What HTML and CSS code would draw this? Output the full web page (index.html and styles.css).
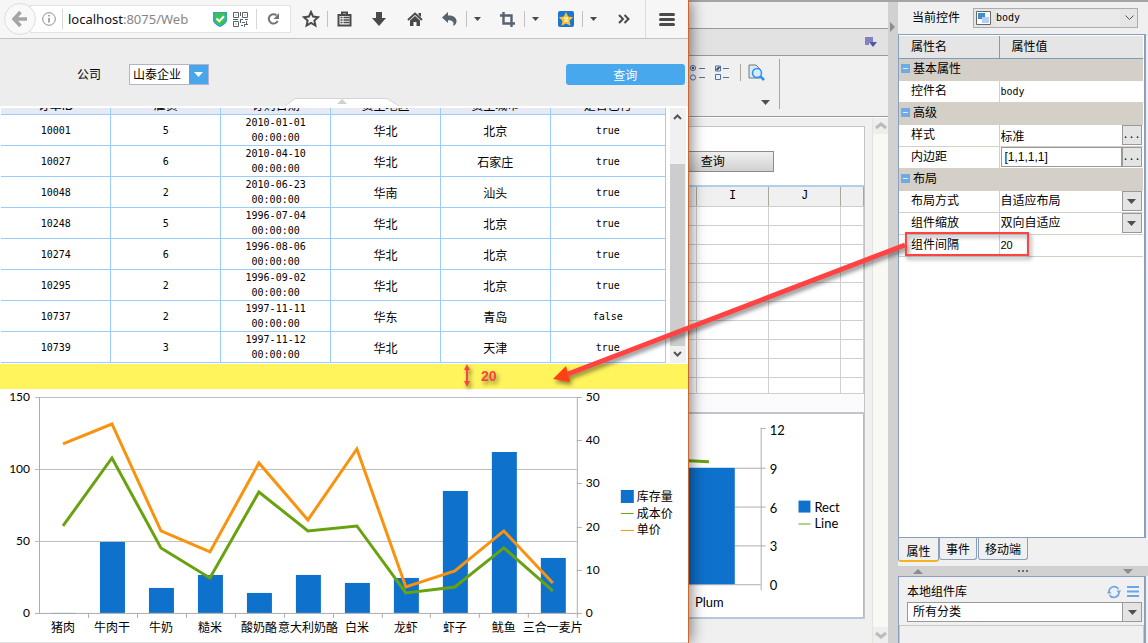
FILE: index.html
```html
<!DOCTYPE html>
<html lang="zh-CN">
<head>
    <meta charset="UTF-8">
    <meta name="viewport" content="width=device-width, initial-scale=1.0">
    <title>组件间隔</title>
    <link rel="stylesheet" href="styles.css">
</head>
<body>
    <div class="browser">
        <div class="toolbar">
            <button class="back" aria-label="后退"><svg width="16" height="16" viewBox="0 0 16 16"><path d="M8.500 1L2 8l6.500 7M3 8h12" fill="none" stroke="#a5a5a5" stroke-width="3.600"/></svg></button>
            <div class="urlbar">
                <svg width="14" height="14" viewBox="0 0 14 14"><circle cx="7" cy="7" r="6.300" fill="none" stroke="#8c8c8c"/><path d="M7 6v4.500M7 3v1.600" stroke="#8c8c8c" stroke-width="1.500"/></svg>
                <a class="url" href="#"><b>localhost</b>:8075/Web</a>
                <svg width="14" height="15" viewBox="0 0 14 15"><path d="M0 0h14v9q-2 4-7 6q-5-2-7-6z" fill="#2f9fd6"/><path d="M1.500 1h11v8q-2 3-5.500 4.600Q3 12 1.500 9z" fill="#3fc14d"/><path d="M3.500 6.500L6.300 9.300l4.700-5" fill="none" stroke="#fff" stroke-width="2"/></svg>
                <svg width="15" height="15" viewBox="0 0 15 15"><g fill="none" stroke="#5a6270"><path d="M.5.5h5v5h-5zM9.500.5h5v5h-5zM.5 9.500h5v5h-5zM2.500 3h1M11.500 3h1M2.500 12h1"/><path d="M7.500 0v4M7 7.500h3M0 7.500h5M12 7.500h3M7.500 8v3M9 10.500h3M8 13.500h2M12 12.500h3M13.500 9v3M11.500 12v3"/></g></svg>
                <button class="reload" aria-label="刷新"><svg width="13" height="14" viewBox="0 0 13 14"><path d="M9.500 3.200A4.700 4.700 0 1 0 10.700 9" fill="none" stroke="#747474" stroke-width="2"/><path d="M12 1v6H6.500z" fill="#747474"/></svg></button>
            </div>
            <button class="tool tool-star" aria-label="收藏"><svg width="18" height="18" viewBox="0 0 18 18"><path d="M9 2l2.100 4.600 5 .6-3.700 3.400 1 4.900L9 13l-4.400 2.500 1-4.900L1.900 7.200l5-.6z" fill="none" stroke="#4a4a4a" stroke-width="2"/></svg></button>
            <button class="tool" aria-label="书签"><svg width="15" height="16" viewBox="0 0 15 16"><path d="M1.500 4h12v10.500h-12zM5 3.500V1.500h5v2" fill="none" stroke="#4a4a4a" stroke-width="2"/><path d="M3.500 6.500h2M6.500 6.500h6M3.500 9h2M6.500 9h6M3.500 11.500h2M6.500 11.500h6" stroke="#4a4a4a" stroke-width="1.500"/></svg></button>
            <button class="tool tool-wide" aria-label="下载"><svg width="14" height="14" viewBox="0 0 14 14"><path d="M4 0h6v6h4l-7 8-7-8h4z" fill="#4a4a4a"/></svg></button>
            <button class="tool tool-wide" aria-label="主页"><svg width="16" height="15" viewBox="0 0 16 15"><path d="M1 8l7-6.500L15 8" fill="none" stroke="#4a4a4a" stroke-width="2"/><path d="M3 8.500l5-4.500 5 4.500V14H9.500v-4h-3v4H3zM11.500 1H14v4l-2.500-2z" fill="#4a4a4a"/></svg></button>
            <button class="tool" aria-label="撤销"><svg width="16" height="14" viewBox="0 0 16 14"><path d="M0 5.500L6 0v3.500c5-.5 9 2 8.500 6.500-.3 2-1.500 3.300-3.500 4 1.500-3.500 0-6-5-5.800V11z" fill="#566270"/></svg></button>
            <button class="caret" aria-label="更多撤销"><svg width="7" height="4" viewBox="0 0 7 4"><path d="M0 0h7L3.500 4z" fill="#4a4a4a"/></svg></button>
            <button class="tool" aria-label="截图"><svg width="15" height="15" viewBox="0 0 15 15"><path d="M3.500 0v11.500H15M0 3.500h11.500V15" fill="none" stroke="#566270" stroke-width="2.400"/></svg></button>
            <button class="caret" aria-label="更多截图"><svg width="7" height="4" viewBox="0 0 7 4"><path d="M0 0h7L3.500 4z" fill="#4a4a4a"/></svg></button>
            <button class="tool" aria-label="空间"><svg width="16" height="16" viewBox="0 0 16 16"><rect width="16" height="16" rx="2" fill="#1976d2"/><path d="M8 1l2.200 4.600 5 .6-3.700 3.500 1 5L8 12.400 3.500 14.700l1-5L.8 6.200l5-.6z" fill="#fdc22d"/><path d="M5.500 7h4.500L6.500 10h4" fill="none" stroke="#fff"/></svg></button>
            <button class="caret" aria-label="更多空间"><svg width="7" height="4" viewBox="0 0 7 4"><path d="M0 0h7L3.500 4z" fill="#4a4a4a"/></svg></button>
            <button class="tool" aria-label="更多工具"><svg width="12" height="10" viewBox="0 0 12 10"><path d="M1 1l4 4-4 4M6.500 1l4 4-4 4" fill="none" stroke="#4a4a4a" stroke-width="2"/></svg></button>
            <button class="menu" aria-label="菜单"><svg width="16" height="13" viewBox="0 0 16 13"><path d="M1.500 1.500h13M1.500 6.500h13M1.500 11.500h13" stroke="#4a4a4a" stroke-width="3" stroke-linecap="round"/></svg></button>
        </div>

        <div class="query">
            <label for="company">公司</label>
            <div class="company">
                <select id="company"><option>山泰企业</option></select>
                <span class="company-arrow"><svg width="9" height="5" viewBox="0 0 9 5"><path d="M0 0h9L4.500 5z" fill="#fff"/></svg></span>
            </div>
            <button class="search">查询</button>
            <svg class="handle" width="114" height="8" viewBox="0 0 114 8"><path d="M0 8L10 .5h92L114 8" fill="#fff" stroke="#d5d5d5"/><path d="M57 1l5 5H52z" fill="#cfcfcf"/></svg>
        </div>

        <div class="report">
            <div class="report-view">
                <table class="orders">
                    <thead>
                        <tr><th>订单ID</th><th>雇员</th><th>订购日期</th><th>货主地区</th><th>货主城市</th><th>是否已付</th></tr>
                    </thead>
                    <tbody>
                        <tr><td>10001</td><td>5</td><td>2010-01-01<br>00:00:00</td><td class="zh">华北</td><td class="zh">北京</td><td>true</td></tr>
                        <tr><td>10027</td><td>6</td><td>2010-04-10<br>00:00:00</td><td class="zh">华北</td><td class="zh">石家庄</td><td>true</td></tr>
                        <tr><td>10048</td><td>2</td><td>2010-06-23<br>00:00:00</td><td class="zh">华南</td><td class="zh">汕头</td><td>true</td></tr>
                        <tr><td>10248</td><td>5</td><td>1996-07-04<br>00:00:00</td><td class="zh">华北</td><td class="zh">北京</td><td>true</td></tr>
                        <tr><td>10274</td><td>6</td><td>1996-08-06<br>00:00:00</td><td class="zh">华北</td><td class="zh">北京</td><td>true</td></tr>
                        <tr><td>10295</td><td>2</td><td>1996-09-02<br>00:00:00</td><td class="zh">华北</td><td class="zh">北京</td><td>true</td></tr>
                        <tr><td>10737</td><td>2</td><td>1997-11-11<br>00:00:00</td><td class="zh">华东</td><td class="zh">青岛</td><td>false</td></tr>
                        <tr><td>10739</td><td>3</td><td>1997-11-12<br>00:00:00</td><td class="zh">华北</td><td class="zh">天津</td><td>true</td></tr>
                    </tbody>
                </table>
            </div>
            <div class="scrollbar">
                <svg width="9" height="6" viewBox="0 0 9 6"><path d="M1 5l3.500-3.500L8 5" fill="none" stroke="#555" stroke-width="2"/></svg>
                <div class="thumb"></div>
                <svg width="9" height="6" viewBox="0 0 9 6"><path d="M1 1l3.500 3.500L8 1" fill="none" stroke="#555" stroke-width="2"/></svg>
            </div>
        </div>

        <div class="spacer"></div>

        <svg class="chart" viewBox="0 0 688 253">
            <path d="M35 8.500h542M35 80.500h542M35 152.500h542" stroke="#bdbdbd" fill="none"/>
            <g fill="#0e71cc">
                <rect x="51" y="224" width="25" height="1"/>
                <rect x="100" y="153" width="25" height="71"/>
                <rect x="149" y="199" width="25" height="25"/>
                <rect x="198" y="186" width="25" height="38"/>
                <rect x="247" y="204" width="25" height="20"/>
                <rect x="296" y="186" width="25" height="38"/>
                <rect x="345" y="194" width="25" height="30"/>
                <rect x="394" y="189" width="25" height="35"/>
                <rect x="443" y="102" width="25" height="122"/>
                <rect x="492" y="63" width="25" height="161"/>
                <rect x="541" y="169" width="25" height="55"/>
            </g>
            <path d="M39.500 8v216M35 224.500h547M577.500 8v221M577 8.500h5M577 51.500h5M577 94.500h5M577 138.500h5M577 181.500h5M88.500 224v5M137.500 224v5M186.500 224v5M235.500 224v5M284.500 224v5M333.500 224v5M382.500 224v5M430.500 224v5M479.500 224v5M528.500 224v5" stroke="#adadad" fill="none"/>
            <polyline points="63,55 112,35 161,142 210,163 259,74 308,131 357,60 406,198 455,182 504,142 553,194" fill="none" stroke="#f9930f" stroke-width="3"/>
            <polyline points="63,137 112,69 161,159 210,189 259,103 308,142 357,137 406,204 455,198 504,159 553,202" fill="none" stroke="#69a20f" stroke-width="3"/>
            <g class="axis-left"><text x="30" y="12">150</text><text x="30" y="84">100</text><text x="30" y="156">50</text><text x="30" y="228">0</text></g>
            <g><text x="586" y="12">50</text><text x="586" y="55">40</text><text x="586" y="98">30</text><text x="586" y="142">20</text><text x="586" y="185">10</text><text x="586" y="228">0</text></g>
            <g class="categories">
                <text x="63" y="243">猪肉</text><text x="112" y="243">牛肉干</text><text x="161" y="243">牛奶</text><text x="210" y="243">糙米</text><text x="259" y="243">酸奶酪</text><text x="308" y="243">意大利奶酪</text><text x="357" y="243">白米</text><text x="406" y="243">龙虾</text><text x="455" y="243">虾子</text><text x="504" y="243">鱿鱼</text><text x="553" y="243">三合一麦片</text>
            </g>
            <rect x="621" y="101" width="13" height="13" fill="#0e71cc"/>
            <path d="M621 124.500h13" stroke="#69a20f"/>
            <path d="M621 141.500h13" stroke="#f9930f"/>
            <text x="637" y="112">库存量</text><text x="637" y="129">成本价</text><text x="637" y="145">单价</text>
        </svg>
    </div>

    <div class="designer">
        <div class="designer-top"></div>
        <div class="designer-bar">
            <svg width="12" height="10" viewBox="0 0 12 10"><path d="M0 0h8v5H4v3H0z" fill="#7f80c5"/><path d="M4 5h8L8 10z" fill="#5254ab"/></svg>
        </div>
        <div class="widgets">
            <div class="widget-group">
                <div class="widget-row">
                    <svg width="15" height="16" viewBox="0 0 15 16"><g fill="none" stroke="#5270a5"><circle cx="3" cy="3" r="2.600"/><circle cx="3" cy="12.500" r="2.600"/><path d="M9 3.500h6M9 12.500h6"/></g><circle cx="3" cy="3" r="1.200" fill="#344d8c"/></svg>
                    <svg width="15" height="16" viewBox="0 0 15 16"><path d="M.5 1h5v5h-5zM.5 9.500h5v5h-5zM8 3.500h6M8 12.500h6" fill="none" stroke="#5270a5"/><path d="M1.500 5l3-3" stroke="#344d8c" stroke-width="2"/></svg>
                    <svg class="preview" width="17" height="17" viewBox="0 0 17 17"><path d="M1 1h7l4 4v9H1z" fill="#d5ecf7" stroke="#777"/><circle cx="9" cy="9" r="4.500" fill="#d7ecff" stroke="#2e90f7" stroke-width="1.500"/><path d="M12.500 12.500L16 16" stroke="#2e90f7" stroke-width="2.500"/></svg>
                </div>
                <svg width="9" height="5" viewBox="0 0 9 5"><path d="M0 0h9L4.500 5z" fill="#505050"/></svg>
            </div>
        </div>
        <div class="workspace">
            <div class="canvas">
                <div class="canvas-query"><button class="canvas-search">查询</button></div>
                <table class="sheet">
                    <thead><tr><th class="col-cut"></th><th>I</th><th>J</th><th class="col-last"></th></tr></thead>
                    <tbody>
                        <tr><td></td><td></td><td></td><td></td></tr>
                        <tr><td></td><td></td><td></td><td></td></tr>
                        <tr><td></td><td></td><td></td><td></td></tr>
                        <tr><td></td><td></td><td></td><td></td></tr>
                        <tr><td></td><td></td><td></td><td></td></tr>
                        <tr><td></td><td></td><td></td><td></td></tr>
                        <tr><td></td><td></td><td></td><td></td></tr>
                        <tr><td></td><td></td><td></td><td></td></tr>
                        <tr><td></td><td></td><td></td><td></td></tr>
                        <tr class="row-last"><td></td><td></td><td></td><td></td></tr>
                    </tbody>
                </table>
                <div class="canvas-gap"></div>
                <svg class="mini-chart" viewBox="0 0 175 204">
                    <path d="M46 54.500h31M46 93.500h31M46 132.500h31M0 171.500h72M72.500 14v163M72 14.500h5" stroke="#adadad" fill="none"/>
                    <rect x="0" y="54" width="46" height="117" fill="#0e71cc"/>
                    <path d="M0 47L20 48" stroke="#69a20f" stroke-width="3"/>
                    <text x="81" y="21">12</text><text x="81" y="60">9</text><text x="81" y="99">6</text><text x="81" y="138">3</text><text x="81" y="177">0</text>
                    <text x="6" y="194">Plum</text>
                    <rect x="110" y="87" width="12" height="12" fill="#0e71cc"/>
                    <path d="M110 110.500h12" stroke="#69a20f"/>
                    <text x="126" y="98">Rect</text><text x="126" y="115">Line</text>
                </svg>
            </div>
            <div class="canvas-scroll">
                <svg width="16" height="16" viewBox="0 0 16 16"><path d="M3 10l5-4 5 4" fill="none" stroke="#bbb" stroke-width="3"/></svg>
                <svg width="16" height="16" viewBox="0 0 16 16"><path d="M3 6l5 4 5-4" fill="none" stroke="#bbb" stroke-width="3"/></svg>
            </div>
        </div>
    </div>

    <div class="side">
        <div class="divider"><svg width="5" height="10" viewBox="0 0 5 10"><path d="M0 0l5 5-5 5z" fill="#8c8c8c"/></svg></div>
        <div class="panel">
            <div class="current">
                <label for="widget">当前控件</label>
                <div class="widget-select">
                    <svg width="15" height="14" viewBox="0 0 15 14"><path d="M.5.5h14v13H.5z" fill="#fff" stroke="#666"/><path d="M2 2h7v6H2z" fill="#3d8fc9"/><path d="M6 6h7v6H6z" fill="#b7cdf8"/></svg>
                    <select id="widget"><option>body</option></select>
                    <svg width="9" height="6" viewBox="0 0 9 6"><path d="M.5.5l4 4 4-4" fill="none" stroke="#555"/></svg>
                </div>
            </div>
            <div class="props-box">
                <table class="props">
                    <thead><tr><th>属性名</th><th>属性值</th></tr></thead>
                    <tbody>
                        <tr class="group"><td colspan="2"><button class="fold" aria-label="折叠基本属性">−</button>基本属性</td></tr>
                        <tr><td><label for="p-name">控件名</label></td><td><input class="code" id="p-name" type="text" value="body"></td></tr>
                        <tr class="group"><td colspan="2"><button class="fold" aria-label="折叠高级">−</button>高级</td></tr>
                        <tr><td><label for="p-style">样式</label></td><td><div class="field"><input id="p-style" type="text" value="标准"><button class="more">...</button></div></td></tr>
                        <tr><td><label for="p-padding">内边距</label></td><td><div class="field"><input class="boxed" id="p-padding" type="text" value="[1,1,1,1]"><button class="more">...</button></div></td></tr>
                        <tr class="group"><td colspan="2"><button class="fold" aria-label="折叠布局">−</button>布局</td></tr>
                        <tr><td><label for="p-layout">布局方式</label></td><td><div class="field"><select id="p-layout"><option>自适应布局</option></select><span class="more"><svg width="9" height="5" viewBox="0 0 9 5"><path d="M0 0h9L4.500 5z" fill="#505050"/></svg></span></div></td></tr>
                        <tr><td><label for="p-scale">组件缩放</label></td><td><div class="field"><select id="p-scale"><option>双向自适应</option></select><span class="more"><svg width="9" height="5" viewBox="0 0 9 5"><path d="M0 0h9L4.500 5z" fill="#505050"/></svg></span></div></td></tr>
                        <tr><td><label for="p-gap">组件间隔</label></td><td><input class="number" id="p-gap" type="text" value="20"></td></tr>
                    </tbody>
                </table>
            </div>
            <div class="tabs">
                <button class="tab active">属性</button>
                <button class="tab">事件</button>
                <button class="tab tab-mobile">移动端</button>
            </div>
            <div class="splitter">
                <svg width="10" height="5" viewBox="0 0 10 5"><path d="M5 0l5 5H0z" fill="#8c8c8c"/></svg>
                <svg width="10" height="2" viewBox="0 0 10 2"><path d="M0 0h2v2H0zM4 0h2v2H4zM8 0h2v2H8z" fill="#6c6c6c"/></svg>
                <svg width="10" height="5" viewBox="0 0 10 5"><path d="M0 0h10L5 5z" fill="#8c8c8c"/></svg>
            </div>
            <div class="library">
                <div class="library-head">
                    <label for="category">本地组件库</label>
                    <svg width="14" height="14" viewBox="0 0 14 14"><path d="M2 6a5.200 5.200 0 0 1 9.500-2M12 8a5.200 5.200 0 0 1-9.500 2" fill="none" stroke="#6ea5e8" stroke-width="1.600"/><path d="M9.500 5.500h4.500L12 9zM0 8.500h4.500L2 5z" fill="#6ea5e8"/></svg>
                    <svg width="12" height="11" viewBox="0 0 12 11"><path d="M0 1h12M0 5.500h12M0 10h12" stroke="#6ea5e8" stroke-width="2"/></svg>
                </div>
                <div class="category">
                    <select id="category"><option>所有分类</option></select>
                    <span class="more"><svg width="9" height="5" viewBox="0 0 9 5"><path d="M0 0h9L4.500 5z" fill="#505050"/></svg></span>
                </div>
                <div class="library-list"></div>
            </div>
        </div>
    </div>

    <svg class="notes" viewBox="0 0 1148 643">
        <g class="note-mark">
            <rect x="906" y="233" width="122" height="22" fill="none" stroke="#ff4343" stroke-width="2"/>
            <path d="M905 245L568 374" stroke="#ff4343" stroke-width="5"/>
            <path d="M553 379L566 366 570 382z" fill="#ff4016"/>
            <path d="M467 368v16" stroke="#ff4343" stroke-width="2"/>
            <path d="M467 364l3 6h-6zM467 387l3-6h-6z" fill="#ff4343"/>
            <text x="481" y="381">20</text>
        </g>
    </svg>
</body>
</html>
```
FILE: styles.css
```css
* {
    box-sizing: border-box;
}
body {
    margin: 0;
    display: flex;
    min-height: 100vh;
    position: relative;
    overflow: hidden;
    background: #f0f0f0;
    color: #000;
    font-family: "Liberation Sans", "Noto Sans CJK SC", sans-serif;
    font-size: 12px;
    line-height: 16px;
}
button,
input,
select {
    font: inherit;
    color: inherit;
    border: none;
    margin: 0;
    padding: 0;
    background: none;
    appearance: none;
    min-width: 0;
}
svg {
    display: block;
    flex-shrink: 0;
}
table {
    border-collapse: collapse;
    table-layout: fixed;
    width: 100%;
}

/* browser window */
.browser {
    width: 60%;
    display: flex;
    flex-direction: column;
    background: #fff;
    border-right: 1px solid #d0672a;
    box-shadow: 2px 0 14px rgba(0, 0, 0, 0.5);
    position: relative;
    z-index: 1;
}
.toolbar {
    display: flex;
    align-items: center;
    height: 39px;
    background: #f6f6f6;
    border-bottom: 1px solid #c2c2c2;
}
.back {
    display: flex;
    align-items: center;
    justify-content: center;
    width: 32px;
    height: 32px;
    margin-left: 4px;
    background: #f9f9f9;
    border: 1px solid #dedede;
    border-radius: 50%;
    z-index: 1;
}
.urlbar {
    display: flex;
    align-items: center;
    gap: 6px;
    width: 261px;
    height: 28px;
    margin-left: -6px;
    padding-left: 11px;
    background: #fff;
    border: 1px solid #e2e2e2;
}
.url {
    flex: 1;
    height: 20px;
    padding-left: 5px;
    border-left: 1px solid #d8d8d8;
    white-space: nowrap;
    color: #858585;
    text-decoration: none;
    font-family: "Noto Sans", sans-serif;
    font-size: 13px;
    line-height: 20px;
}
.url b {
    font-weight: normal;
    color: #111;
}
.reload {
    display: flex;
    align-items: center;
    justify-content: center;
    width: 34px;
    height: 20px;
    margin-left: 2px;
    border-left: 1px solid #d8d8d8;
}
.tool {
    display: flex;
    align-items: center;
    justify-content: center;
    width: 33px;
    height: 16px;
}
.tool-star {
    width: 33px;
    margin-left: 4px;
    border-right: 1px solid #c2c2c2;
}
.tool-wide {
    width: 36px;
}
.caret {
    display: flex;
    align-items: center;
    width: 25px;
    height: 16px;
    padding-left: 7px;
    border-left: 1px solid #c2c2c2;
}
.menu {
    display: flex;
    align-items: center;
    justify-content: center;
    width: 43px;
    height: 38px;
    margin-left: auto;
    border-left: 1px solid #dcdcdc;
}

.query {
    display: flex;
    align-items: center;
    height: 67px;
    padding: 4px 3px 0 77px;
    background: #ededed;
    position: relative;
}
.company {
    display: flex;
    width: 80px;
    height: 21px;
    margin-left: 28px;
    background: #fff;
    border: 1px solid #b3b3cc;
}
.company select {
    flex: 1;
    padding-left: 3px;
}
.company-arrow {
    display: flex;
    align-items: center;
    justify-content: center;
    width: 19px;
    background: #48a7ec;
    pointer-events: none;
}
.search {
    width: 119px;
    height: 21px;
    margin-left: auto;
    padding-top: 2px;
    background: #48a8ed;
    border-radius: 3px;
    color: #fff;
}
.handle {
    position: absolute;
    left: 50%;
    bottom: 0;
    transform: translateX(-59px);
}

.report {
    display: flex;
    height: 255px;
    margin-top: 2px;
    padding: 0 2px 0 1px;
}
.report-view {
    flex: 1;
    display: flex;
    flex-direction: column;
    justify-content: flex-end;
    overflow: hidden;
}
.orders {
    font-family: "DejaVu Sans Mono", monospace;
    font-size: 10px;
    line-height: 15px;
    text-align: center;
}
.orders th {
    height: 24px;
    padding: 0;
    background: #e6eaf4;
    border: 1px solid #99ccff;
    font-family: "Liberation Sans", "Noto Sans CJK SC", sans-serif;
    font-size: 12px;
    font-weight: normal;
    vertical-align: bottom;
}
.orders td {
    height: 31px;
    padding: 0;
    border: 1px solid #99ccff;
}
.orders th:first-child,
.orders td:first-child {
    border-left: none;
}
.orders th:last-child {
    width: 115px;
}
.orders .zh {
    font-family: "Noto Sans CJK SC", sans-serif;
    font-size: 12px;
}
.scrollbar {
    display: flex;
    flex-direction: column;
    align-items: center;
    width: 16px;
    margin-left: 4px;
    padding: 6px 0;
    background: #f0f0f0;
}
.thumb {
    width: 15px;
    height: 182px;
    margin: auto 0 5px;
    background: #cdcdcd;
}
.spacer {
    height: 25px;
    margin-top: 1px;
    background: #fff45c;
}
.chart {
    width: 100%;
    border-bottom: 1px solid #ddd;
    font-family: Lato, "Noto Sans CJK SC", sans-serif;
    font-size: 12px;
}
.axis-left {
    text-anchor: end;
}
.categories {
    text-anchor: middle;
}

/* report designer */
.designer {
    flex: 1;
    display: flex;
    flex-direction: column;
    min-width: 0;
}
.designer-top {
    height: 29px;
    border-top: 2px solid #a5a5a5;
    border-bottom: 1px solid #999;
}
.designer-bar {
    display: flex;
    align-items: center;
    justify-content: flex-end;
    height: 27px;
    padding-right: 11px;
    background: #e2e2e2;
    border-bottom: 1px solid #999;
}
.widgets {
    height: 61px;
    padding-top: 3px;
    border-bottom: 1px solid #999;
}
.widget-group {
    display: flex;
    flex-direction: column;
    align-items: flex-end;
    justify-content: space-between;
    width: 91px;
    height: 50px;
    padding: 5px 9px 4px 0;
    border-right: 1px solid #aca899;
}
.widget-row {
    display: flex;
    align-items: center;
    gap: 10px;
    margin-right: 5px;
}
.preview {
    width: 25px;
    padding-left: 7px;
    border-left: 1px solid #aca899;
}
.workspace {
    flex: 1;
    display: flex;
    justify-content: space-between;
    border-top: 1px solid #fff;
}
.canvas {
    flex: 1;
    display: flex;
    flex-direction: column;
    align-self: flex-start;
    margin: 8px 7px 0 0;
    background: #fff;
    border: 1px solid #c4c4c4;
    border-left: none;
    border-bottom: 2px solid #b8c8d8;
}
.canvas-query {
    height: 58px;
    padding-top: 24px;
}
.canvas-search {
    display: block;
    width: 85px;
    height: 21px;
    padding-right: 36px;
    background: linear-gradient(#f0f0f0, #d0d0d0);
    border: 1px solid #8c8c8c;
    border-left: none;
}
.sheet {
    border-top: 2px solid #b0cfe8;
    border-right: 1px solid #b0cfe8;
    font-family: "Liberation Mono", monospace;
    font-size: 12px;
}
.sheet th {
    height: 20px;
    padding: 0;
    background: #f0f0f0;
    border-right: 1px solid #aca899;
    border-bottom: 1px solid #cfcfcf;
    font-weight: normal;
}
.sheet td {
    height: 19px;
    padding: 0;
    border-right: 1px solid #cfcfcf;
    border-bottom: 1px solid #cfcfcf;
}
.sheet .row-last td {
    height: 16px;
}
.sheet .col-cut {
    width: 8px;
}
.sheet .col-last {
    width: 23px;
}
.canvas-gap {
    height: 20px;
    background: #fbfbfd;
    border-bottom: 2px solid #c4c4c4;
}
.mini-chart {
    width: 100%;
    border-right: 1px solid #bbb;
    font-family: Lato, sans-serif;
    font-size: 13px;
}
.canvas-scroll {
    display: flex;
    flex-direction: column;
    justify-content: space-between;
    width: 16px;
    background: #f8f8f5;
    border-left: 1px solid #e4e4da;
}
.canvas-scroll svg {
    background: #eee;
}

/* property panel */
.side {
    display: flex;
    width: 260px;
    border-top: 2px solid #a5a5a5;
}
.divider {
    width: 10px;
    padding: 20px 0 0 2px;
    background: #d1d1d1;
}
.panel {
    flex: 1;
    display: flex;
    flex-direction: column;
    min-width: 0;
    padding-right: 2px;
}
.current {
    display: flex;
    align-items: center;
    justify-content: space-between;
    height: 32px;
    padding: 0 8px 0 14px;
}
.widget-select {
    display: flex;
    align-items: center;
    gap: 5px;
    width: 165px;
    height: 20px;
    padding: 0 3px 0 2px;
    background: #e5e5e5;
    border: 1px solid #adadad;
}
.widget-select select {
    flex: 1;
    height: 16px;
    background: #eaeaea;
    font-family: "DejaVu Sans Mono", monospace;
    font-size: 10px;
}
.props-box {
    flex: 1;
    padding: 1px 1px 0 0;
    background: #fff;
    border: 1px solid #8a9fbb;
    border-right-width: 2px;
}
.props th {
    height: 22px;
    padding: 0 12px;
    background: #e5e5e5;
    border-bottom: 1px solid #7a9cc0;
    font-weight: normal;
    text-align: left;
}
.props th:first-child {
    width: 100px;
    border-right: 1px solid #7a9cc0;
}
.props td {
    height: 22px;
    padding: 0 1px;
    border-bottom: 1px solid #d4d0c8;
}
.props td:first-child {
    padding-left: 12px;
    border-right: 1px solid #d4d0c8;
}
.props .group td {
    padding-left: 2px;
    background: #d4d0c8;
}
.props input {
    display: block;
    width: 100%;
    height: 20px;
}
.fold {
    width: 9px;
    height: 9px;
    margin-right: 3px;
    background: #6eaae8;
    color: #fff;
    font-size: 10px;
    line-height: 9px;
    vertical-align: 1px;
}
.field {
    display: flex;
    height: 20px;
}
.field select {
    flex: 1;
}
.props .boxed {
    padding-left: 3px;
    border: 1px solid #999;
}
.props .code {
    font-family: "DejaVu Sans Mono", monospace;
    font-size: 10px;
}
.props .number {
    font-size: 11px;
}
.more {
    display: flex;
    align-items: center;
    justify-content: center;
    width: 20px;
    height: 100%;
    flex-shrink: 0;
    background: #e4e4e4;
    border: 1px solid #999;
    font-family: "DejaVu Sans Mono", monospace;
    font-size: 10px;
    pointer-events: none;
}
.tabs {
    display: flex;
    height: 28px;
}
.tab {
    width: 38px;
    height: 22px;
    padding-top: 2px;
    border: 1px solid #8a9fbb;
    border-top: none;
    border-radius: 0 0 3px 3px;
    margin-right: 1px;
}
.tab.active {
    width: 41px;
    height: 24px;
    margin: 0;
    padding-top: 6px;
    border-bottom: 2px solid #f5b324;
}
.tab-mobile {
    width: 50px;
}
.splitter {
    display: flex;
    align-items: center;
    justify-content: space-between;
    height: 10px;
    margin-right: -2px;
    padding: 0 15px;
    background: #d1d1d1;
}
.library {
    height: 67px;
    border: 1px solid #8a9fbb;
    border-right-width: 2px;
    border-bottom: none;
}
.library-head {
    display: flex;
    align-items: center;
    gap: 6px;
    height: 25px;
    padding: 4px 5px 0 8px;
}
.library-head label {
    flex: 1;
}
.category {
    display: flex;
    height: 20px;
    margin: 0 2px 0 8px;
    background: #fff;
    border: 1px solid #999;
}
.category select {
    flex: 1;
    padding-left: 5px;
}
.category .more {
    width: 19px;
    border-width: 0 0 0 1px;
}
.library-list {
    height: 18px;
    margin-top: 3px;
    border: 1px solid #c9c8ba;
    border-bottom: none;
}

/* callouts drawn over both windows */
.notes {
    position: absolute;
    top: 0;
    left: 0;
    width: 100%;
    z-index: 2;
    pointer-events: none;
}
.note-mark {
    filter: drop-shadow(2px 3px 2px rgba(0, 0, 0, 0.45));
}
.notes text {
    fill: #ff4343;
    font-family: "Liberation Sans", sans-serif;
    font-size: 14px;
    font-weight: bold;
}
```
